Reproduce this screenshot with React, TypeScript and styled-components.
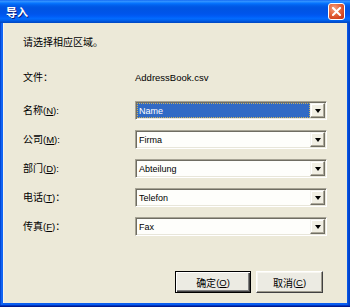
import React from "react";
import styled, { createGlobalStyle } from "styled-components";

const Global = createGlobalStyle`
  html, body { margin: 0; padding: 0; background: #ffffff; }
  #root { width: 350px; height: 307px; }
`;

const CJK = `"Noto Sans CJK SC", "Liberation Sans", sans-serif`;
const LATIN = `"Liberation Sans", "Noto Sans CJK SC", sans-serif`;

const Window = styled.div`
  width: 350px;
  height: 307px;
  box-sizing: border-box;
  display: flex;
  flex-direction: column;
  background: linear-gradient(to right, #0030b8 0px, #0a5ef0 1px, #166af5 2px, #0a5ef0 3px, #0a5ef0 347px, #0040c8 349px);
  box-shadow: inset 0 -1px 0 #001a8c, inset 0 -2px 0 #0034c0;
  overflow: hidden;
`;

const TitleBar = styled.div`
  height: 23px;
  flex: 0 0 23px;
  display: flex;
  align-items: center;
  justify-content: space-between;
  padding: 0 5px 0 6px;
  background: linear-gradient(
    to bottom,
    #0058ee 0%, #3a93ff 4%, #288eff 8%, #127dff 12%, #036ffc 16%,
    #0262ee 22%, #0057e5 30%, #0054e3 40%, #0055eb 60%, #005bf5 70%,
    #026afe 80%, #0062ef 88%, #0052d6 94%, #0046c0 100%
  );
`;

const Title = styled.span`
  font-family: ${CJK};
  font-size: 11px;
  font-weight: 700;
  color: #ffffff;
  text-shadow: 1px 1px 0 #0a1e80;
  line-height: 14px;
`;

const CloseButton = styled.div`
  width: 17px;
  height: 17px;
  box-sizing: border-box;
  border: 1px solid #ffffff;
  border-radius: 3px;
  background: radial-gradient(circle at 35% 30%, #f4a080 0%, #e6693f 40%, #d2431f 75%, #b8321a 100%);
  display: flex;
  align-items: center;
  justify-content: center;
`;

const Client = styled.div`
  flex: 1;
  margin: 0 3px 4px 3px;
  background: #ece9d8;
  box-shadow: inset 1px 0 0 #f6f4ec;
  display: flex;
  flex-direction: column;
  padding: 10px 24px 10px 20px;
  box-sizing: border-box;
`;

const Instruction = styled.div`
  font-family: ${CJK};
  font-size: 10px;
  line-height: 18px;
  height: 18px;
  color: #000;
`;

const FileRow = styled.div`
  margin-top: 17px;
  display: grid;
  grid-template-columns: 112px 1fr;
  height: 18px;
  align-items: center;
`;

const Label = styled.span`
  font-family: ${CJK};
  font-size: 10px;
  line-height: 18px;
  color: #000;
  white-space: nowrap;
`;

const Latin = styled.span`
  font-family: ${LATIN};
  font-size: 9.5px;
`;

const Mnemonic = styled.span`
  text-decoration: underline;
`;

const FileName = styled.span`
  font-family: ${LATIN};
  font-size: 9.5px;
  color: #000;
`;

const Fields = styled.div`
  margin-top: 15px;
  display: grid;
  grid-template-columns: 112px 192px;
  grid-auto-rows: 19px;
  row-gap: 10px;
  align-items: center;
`;

const Combo = styled.div`
  height: 19px;
  box-sizing: border-box;
  border-style: solid;
  border-width: 1px;
  border-color: #a6a394 #ffffff #ffffff #a6a394;
  box-shadow: inset 1px 1px 0 #6f6d62, inset -1px -1px 0 #e8e6da;
  background: #fefefb;
  display: flex;
  align-items: stretch;
  padding: 1px;
`;

const ComboText = styled.div<{ $selected?: boolean }>`
  flex: 1;
  display: flex;
  align-items: center;
  padding-left: 2px;
  font-family: ${LATIN};
  font-size: 9px;
  color: ${(p) => (p.$selected ? "#ffffff" : "#000000")};
  background: ${(p) => (p.$selected ? "#316ac5" : "transparent")};
  outline: ${(p) => (p.$selected ? "1px dotted #c8b060" : "none")};
  outline-offset: -1px;
`;

const DropButton = styled.div`
  width: 15px;
  box-sizing: border-box;
  border-style: solid;
  border-width: 1px;
  border-color: #f4f3ee #716f64 #716f64 #f4f3ee;
  box-shadow: inset -1px -1px 0 #aca899, inset 1px 1px 0 #ffffff;
  background: #f1efe4;
  display: flex;
  align-items: center;
  justify-content: center;
`;

const Triangle = styled.div`
  width: 0;
  height: 0;
  border-left: 3.5px solid transparent;
  border-right: 3.5px solid transparent;
  border-top: 4px solid #000;
`;

const ButtonRow = styled.div`
  margin-top: auto;
  display: flex;
  justify-content: flex-end;
  gap: 5px;
`;

const Button = styled.div<{ $default?: boolean; $w: number }>`
  width: ${(p) => p.$w}px;
  height: 22px;
  box-sizing: border-box;
  border-style: solid;
  border-width: 1px;
  border-color: ${(p) => (p.$default ? "#000000" : "#ffffff #404040 #404040 #ffffff")};
  box-shadow: ${(p) =>
    p.$default
      ? "inset 1px 1px 0 #ffffff, inset -1px -1px 0 #404040, inset -2px -2px 0 #808080"
      : "inset -1px -1px 0 #9d9a8c, inset 1px 1px 0 #f8f7f1"};
  background: #ecebe3;
  display: flex;
  align-items: center;
  justify-content: center;
  font-family: ${CJK};
  font-size: 10px;
  color: #000;
`;

function ComboBox({ value, selected }: { value: string; selected?: boolean }) {
  return (
    <Combo>
      <ComboText $selected={selected}>{value}</ComboText>
      <DropButton>
        <Triangle />
      </DropButton>
    </Combo>
  );
}

function FieldLabel({ cn, key2, colon }: { cn: string; key2: string; colon: string }) {
  return (
    <Label>
      {cn}
      <Latin>
        (<Mnemonic>{key2}</Mnemonic>)
      </Latin>
      {colon === ":" ? <Latin>:</Latin> : colon}
    </Label>
  );
}

const fields = [
  { cn: "名称", k: "N", colon: ":", value: "Name", selected: true },
  { cn: "公司", k: "M", colon: ":", value: "Firma" },
  { cn: "部门", k: "D", colon: ":", value: "Abteilung" },
  { cn: "电话", k: "T", colon: "：", value: "Telefon" },
  { cn: "传真", k: "F", colon: "：", value: "Fax" },
];

export default function App() {
  return (
    <>
      <Global />
      <Window>
        <TitleBar>
          <Title>导入</Title>
          <CloseButton>
            <svg width="9" height="9" viewBox="0 0 9 9">
              <path d="M1 1 L8 8 M8 1 L1 8" stroke="#ffffff" strokeWidth="2" strokeLinecap="square" />
            </svg>
          </CloseButton>
        </TitleBar>
        <Client>
          <Instruction>请选择相应区域。</Instruction>
          <FileRow>
            <Label>文件：</Label>
            <FileName>AddressBook.csv</FileName>
          </FileRow>
          <Fields>
            {fields.map((f) => (
              <React.Fragment key={f.cn}>
                <FieldLabel cn={f.cn} key2={f.k} colon={f.colon} />
                <ComboBox value={f.value} selected={f.selected} />
              </React.Fragment>
            ))}
          </Fields>
          <ButtonRow>
            <Button $default $w={76}>
              确定<Latin>(<Mnemonic>O</Mnemonic>)</Latin>
            </Button>
            <Button $w={67}>
              取消<Latin>(<Mnemonic>C</Mnemonic>)</Latin>
            </Button>
          </ButtonRow>
        </Client>
      </Window>
    </>
  );
}
